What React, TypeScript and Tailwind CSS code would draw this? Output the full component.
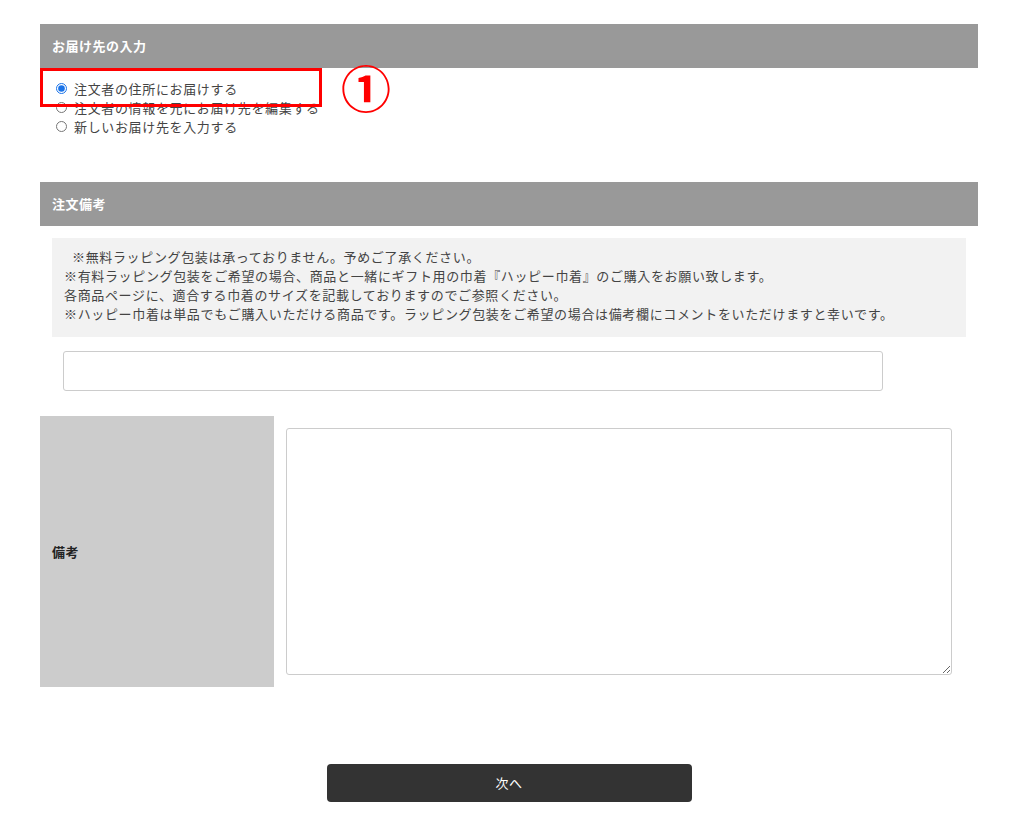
import { useState } from 'react';

const font = { fontFamily: '"Noto Sans CJK JP", "Noto Sans", sans-serif' };

const deliveryOptions = [
  '注文者の住所にお届けする',
  '注文者の情報を元にお届け先を編集する',
  '新しいお届け先を入力する',
];

const notes = [
  '※無料ラッピング包装は承っておりません。予めご了承ください。',
  '※有料ラッピング包装をご希望の場合、商品と一緒にギフト用の巾着『ハッピー巾着』のご購入をお願い致します。',
  '各商品ページに、適合する巾着のサイズを記載しておりますのでご参照ください。',
  '※ハッピー巾着は単品でもご購入いただける商品です。ラッピング包装をご希望の場合は備考欄にコメントをいただけますと幸いです。',
];

function SectionHeader({ title }: { title: string }) {
  return (
    <div className="h-[44px] bg-[#999999] flex items-center pl-[12px]">
      <h2 className="text-[13px] tracking-[0.5px] font-bold text-white">{title}</h2>
    </div>
  );
}

export default function App() {
  const [delivery, setDelivery] = useState(0);

  return (
    <div className="w-[1024px] h-[829px] bg-white overflow-hidden" style={font}>
      <div className="ml-[40px] w-[938px] pt-[24px]">
        <div className="relative">
          <SectionHeader title="お届け先の入力" />

          <div className="pt-[11px] pl-[16px] flex flex-col">
            {deliveryOptions.map((label, i) => (
              <label
                key={label}
                className="h-[19px] flex items-center gap-[7px] text-[13px] tracking-[0.65px] text-[#444444] leading-none"
              >
                <input
                  type="radio"
                  name="delivery"
                  checked={delivery === i}
                  onChange={() => setDelivery(i)}
                  className="m-0 w-[11px] h-[11px] accent-[#1a73e8]"
                />
                {label}
              </label>
            ))}
          </div>

          {/* annotation overlay */}
          <div className="absolute left-0 top-[44px] w-[282px] h-[39px] border-[3px] border-[#ff0000]" />
          <div className="absolute left-[301px] top-[37px] text-[50px] leading-none font-bold text-[#ff0000]">
            ①
          </div>
        </div>

        <div className="mt-[46px]">
          <SectionHeader title="注文備考" />

          <div className="mx-[12px] mt-[12px] bg-[#f2f2f2] pt-[9px] pb-[14px] pl-[12px] text-[13px] tracking-[0.65px] leading-[19px] text-[#444444]">
            {notes.map((n, i) => (
              <p key={i} className={i === 0 ? 'pl-[8px]' : ''}>
                {n}
              </p>
            ))}
          </div>

          <input
            type="text"
            className="block ml-[23px] mt-[14px] w-[820px] h-[40px] border border-[#cccccc] rounded-[3px] outline-none"
          />

          <div className="mt-[25px] flex">
            <div className="w-[234px] h-[271px] bg-[#cccccc] flex items-center pl-[12px]">
              <span className="text-[13px] tracking-[0.5px] font-bold text-[#222222]">備考</span>
            </div>
            <div className="p-[12px]">
              <textarea className="block w-[666px] h-[247px] border border-[#cccccc] rounded-[3px] outline-none resize" />
            </div>
          </div>

          <div className="mt-[77px] flex justify-center">
            <button className="w-[365px] h-[38px] bg-[#333333] rounded-[4px] text-white text-[13px] tracking-[0.5px]">
              次へ
            </button>
          </div>
        </div>
      </div>
    </div>
  );
}
